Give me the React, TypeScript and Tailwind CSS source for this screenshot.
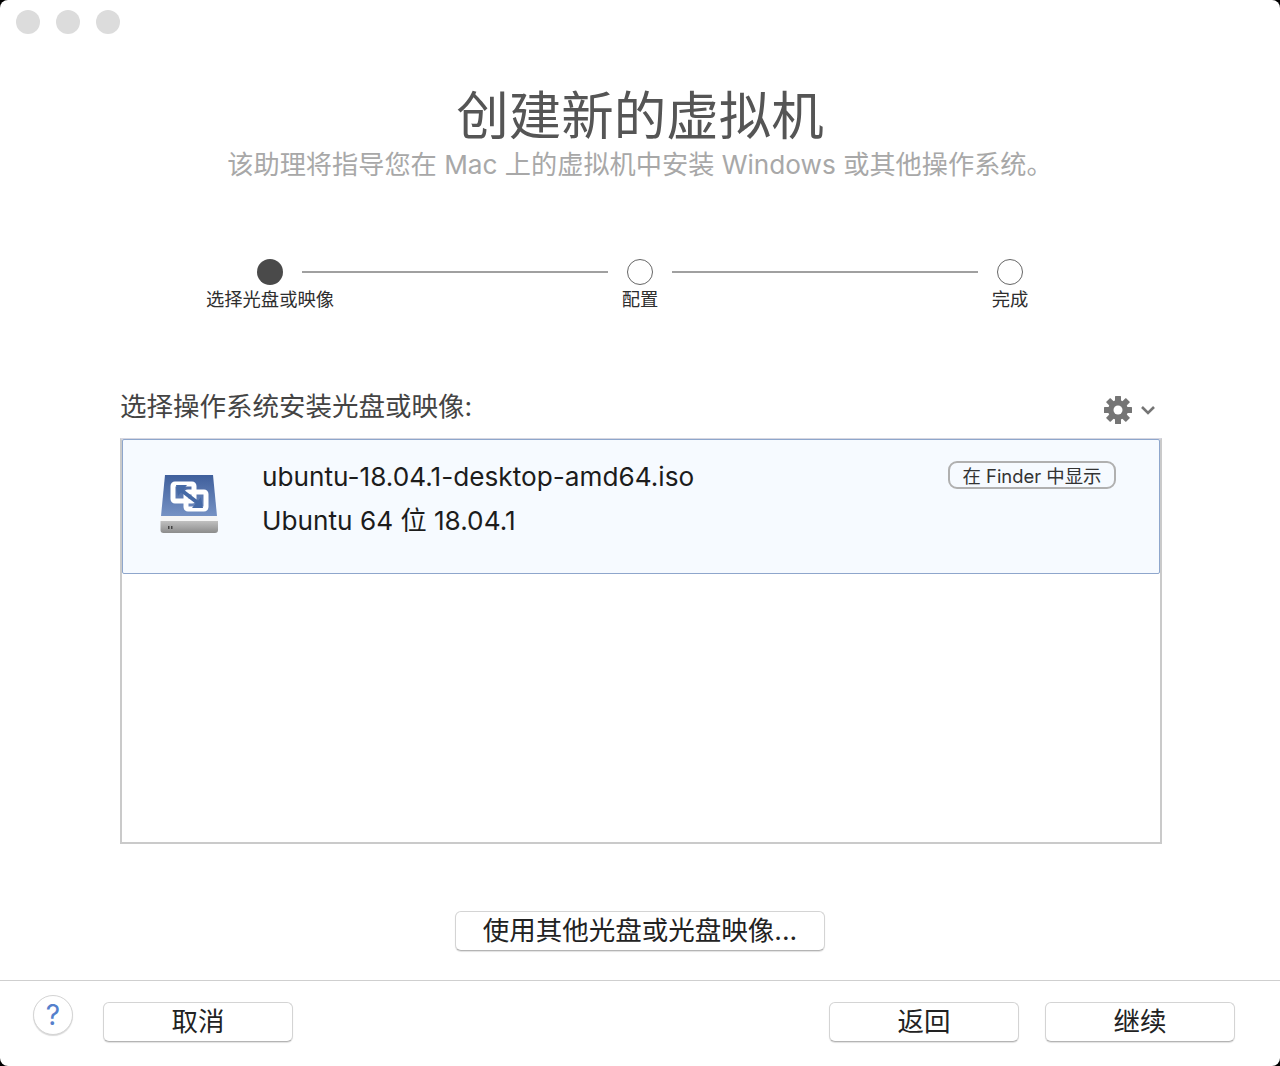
const font = "font-['Inter','Noto_Sans_CJK_SC',sans-serif]";

function DiskIcon() {
  return (
    <svg width="60" height="60" viewBox="0 0 60 60" className="block">
      <defs>
        <linearGradient id="b" x1="0" y1="0" x2="0" y2="1">
          <stop offset="0" stopColor="#3f5f9c" />
          <stop offset="1" stopColor="#7692c4" />
        </linearGradient>
        <linearGradient id="g" x1="0" y1="0" x2="0" y2="1">
          <stop offset="0" stopColor="#c0c0c0" />
          <stop offset="1" stopColor="#8c8c8c" />
        </linearGradient>
      </defs>
      <path d="M5 1 H53 L57 42 H1 Z" fill="url(#b)" />
      <path d="M1 42 H57 L58 47 H0.5 Z" fill="#f6f6f6" />
      <path d="M0.5 47 H58 V56 Q58 59 55 59 H3.5 Q0.5 59 0.5 56 Z" fill="url(#g)" />
      <rect x="8" y="52" width="1.5" height="3" fill="#444" />
      <rect x="11" y="52" width="1.5" height="3" fill="#444" />
      <g fill="none" stroke="#fff" strokeWidth="5" strokeLinejoin="round" strokeLinecap="round">
        <rect x="13" y="10" width="21" height="17" rx="2" />
        <rect x="26" y="18" width="20" height="17" rx="2" />
      </g>
      <path d="M21 16 L38 29" stroke="#466aa6" strokeWidth="4" />
      <path d="M16 11 H27 L18 22 Z M43 34 H32 L41 23 Z" fill="#466aa6" />
    </svg>
  );
}

function GearIcon() {
  const angles = [0, 45, 90, 135, 180, 225, 270, 315];
  return (
    <svg width="28" height="28" viewBox="0 0 28 28" className="block">
      {angles.map((a) => (
        <rect key={a} x="11" y="0" width="6" height="8" rx="0.5" fill="#757575" transform={`rotate(${a} 14 14)`} />
      ))}
      <circle cx="14" cy="14" r="10" fill="#757575" />
      <circle cx="14" cy="14" r="4.5" fill="#ffffff" />
    </svg>
  );
}

function ChevronIcon() {
  return (
    <svg width="16" height="10" viewBox="0 0 16 10" className="block">
      <path d="M2 2 L8 8 L14 2" fill="none" stroke="#757575" strokeWidth="2.6" />
    </svg>
  );
}

function Step({ label, active }: { label: string; active?: boolean }) {
  return (
    <div className="flex flex-col items-center w-[26px]">
      <div
        className={
          active
            ? "w-[26px] h-[26px] rounded-full bg-[#4a4a4a]"
            : "w-[26px] h-[26px] rounded-full bg-white border border-[#666666]"
        }
      />
      <div className="mt-[2px] text-[18.3px] leading-[24px] text-[#2e2e2e] whitespace-nowrap">{label}</div>
    </div>
  );
}

function Line() {
  return <div className="w-[306px] h-[2px] mx-[19px] mt-[12px] bg-[#a0a0a0]" />;
}

function Button({ label, w }: { label: string; w: string }) {
  return (
    <button
      className={`${w} h-[40px] pb-[2px] rounded-[6px] bg-white border border-[#d4d4d4] border-b-[#b4b4b4] shadow-[0_1px_1px_rgba(0,0,0,0.12)] text-[26.5px] leading-[36px] text-[#222222]`}
    >
      {label}
    </button>
  );
}

export default function App() {
  return (
    <div className={`w-[1280px] h-[1066px] bg-black ${font}`}>
      <div className="w-full h-full bg-white rounded-[8px] flex flex-col overflow-hidden">
        <div className="flex gap-[16px] pl-[16px] pt-[10px]">
          <div className="w-[24px] h-[24px] rounded-full bg-[#dcdcdc]" />
          <div className="w-[24px] h-[24px] rounded-full bg-[#dcdcdc]" />
          <div className="w-[24px] h-[24px] rounded-full bg-[#dcdcdc]" />
        </div>
        <h1 className="mt-[46px] text-center text-[52.5px] leading-[72px] text-[#555555]">创建新的虚拟机</h1>
        <p className="mt-[-5px] text-center text-[26.2px] leading-[36px] text-[#a8a8a8]">
          该助理将指导您在 Mac 上的虚拟机中安装 Windows 或其他操作系统。
        </p>
        <div className="mt-[76px] flex justify-center">
          <Step label="选择光盘或映像" active />
          <Line />
          <Step label="配置" />
          <Line />
          <Step label="完成" />
        </div>
        <div className="mt-[77px] ml-[120px] mr-[118px] flex items-center justify-between">
          <span className="text-[26.5px] leading-[36px] text-[#444444]">选择操作系统安装光盘或映像:</span>
          <span className="flex items-center gap-[8px] pr-[6px] mt-[8px]">
            <GearIcon />
            <ChevronIcon />
          </span>
        </div>
        <div className="mt-[14px] ml-[120px] mr-[118px] h-[406px] border-2 border-[#cacaca] border-t-[#d6d6e0]">
          <div className="-mt-[1px] h-[135px] bg-[#f6faff] border border-[#8ea6cc] rounded-[2px] flex items-start">
            <div className="ml-[37px] mt-[34px] w-[60px]">
              <DiskIcon />
            </div>
            <div className="ml-[42px] mt-[15px] flex-1 text-[26.2px] leading-[44px] text-[#1c1c1c]">
              <div>ubuntu-18.04.1-desktop-amd64.iso</div>
              <div>Ubuntu 64 位 18.04.1</div>
            </div>
            <button className="mt-[21px] mr-[43px] w-[168px] h-[28px] rounded-[9px] border-2 border-[#b0b0b0] text-[18.4px] leading-[24px] pt-[1px] text-[#333333]">
              在 Finder 中显示
            </button>
          </div>
        </div>
        <div className="mt-[67px] flex justify-center">
          <Button label="使用其他光盘或光盘映像..." w="w-[370px]" />
        </div>
        <div className="mt-[29px] border-t border-[#cfcfcf] flex items-start pl-[33px] pr-[45px]">
          <div className="mt-[14px] w-[40px] h-[40px] rounded-full bg-white border border-[#d4d4d4] shadow-[0_1px_1px_rgba(0,0,0,0.15)] flex items-center justify-center text-[28px] text-[#5580cc]">
            ?
          </div>
          <div className="mt-[21px] ml-[30px]">
            <Button label="取消" w="w-[190px]" />
          </div>
          <div className="mt-[21px] ml-auto flex gap-[26px]">
            <Button label="返回" w="w-[190px]" />
            <Button label="继续" w="w-[190px]" />
          </div>
        </div>
      </div>
    </div>
  );
}
